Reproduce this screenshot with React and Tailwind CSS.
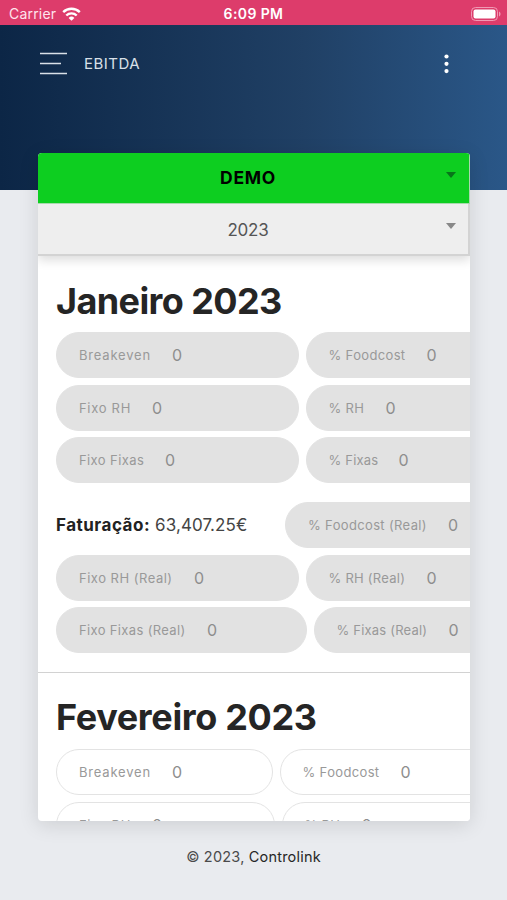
const january = [
  [
    { name: 'Breakeven', size: 'w-[243px]', text: 'w-[71px] tracking-[0.8px]' },
    { name: '% Foodcost', size: 'w-[230px]', text: 'w-[76px] tracking-[0.35px]' },
  ],
  [
    { name: 'Fixo RH', size: 'w-[243px]', text: 'w-[51px] tracking-[0.7px]' },
    { name: '% RH', size: 'w-[230px]', text: 'w-[35px] tracking-[0.35px]' },
  ],
  [
    { name: 'Fixo Fixas', size: 'w-[243px]', text: 'w-[64px] tracking-[0.4px]' },
    { name: '% Fixas', size: 'w-[230px]', text: 'w-[48px] tracking-[0.2px]' },
  ],
];

const januaryReal = [
  [
    { name: 'Fixo RH (Real)', size: 'w-[243px]', text: 'w-[93px] tracking-[0.5px]' },
    { name: '% RH (Real)', size: 'w-[230px]', text: 'w-[76px] tracking-[0.25px]' },
  ],
  [
    { name: 'Fixo Fixas (Real)', size: 'w-[251px]', text: 'w-[106px] tracking-[0.35px]' },
    { name: '% Fixas (Real)', size: 'w-[230px]', text: 'w-[90px] tracking-[0.2px]' },
  ],
];

const february = [
  [
    { name: 'Breakeven', size: 'w-[217px]', text: 'w-[71px] tracking-[0.8px]' },
    { name: '% Foodcost', size: 'w-[230px]', text: 'w-[76px] tracking-[0.35px]' },
  ],
  [
    { name: 'Fixo RH', size: 'w-[219px]', text: 'w-[51px] tracking-[0.7px]' },
    { name: '% RH', size: 'w-[230px]', text: 'w-[35px] tracking-[0.35px]' },
  ],
];

function Field({ name, size, text, outlined }) {
  return (
    <div
      className={`${size} ${outlined ? 'border-[#e3e3e3] bg-white' : 'border-[#e2e2e2] bg-[#e2e2e2]'} flex h-[46px] shrink-0 items-center rounded-full border pl-[22px] text-[#999]`}
    >
      <span className={`${text} shrink-0 pt-[2px] text-[13px] whitespace-nowrap`}>{name}</span>
      <span className="ml-[22px] text-[16px] text-[#8e8e8e]">0</span>
    </div>
  );
}

function Rows({ rows, outlined }) {
  return (
    <div className="flex flex-col gap-[6.5px]">
      {rows.map((row, i) => (
        <div key={i} className="flex gap-[6.5px]">
          {row.map((field) => (
            <Field key={field.name} {...field} outlined={outlined} />
          ))}
        </div>
      ))}
    </div>
  );
}

function Caret({ className }) {
  return (
    <svg className={className} width="10" height="6" viewBox="0 0 10 6" fill="currentColor">
      <path d="M0 0h10L5 6z" />
    </svg>
  );
}

function StatusBar() {
  return (
    <div className="grid h-[25px] shrink-0 grid-cols-3 items-center bg-[#dd3c6b] pt-[2px] pr-[6px] pl-[9px] text-[14px] text-white">
      <div className="flex items-center gap-[6px]">
        <span className="tracking-[0.2px] text-[#ffe4ed]">Carrier</span>
        <svg width="19" height="14" viewBox="0 0 19 14" fill="none" stroke="currentColor" strokeWidth="2.4">
          <path d="M1.2 5.2a11.8 11.8 0 0 1 16.6 0" />
          <path d="M4.3 8.5a7.4 7.4 0 0 1 10.4 0" />
          <path d="M9.5 13.8 6.6 10.9a4.1 4.1 0 0 1 5.8 0z" fill="currentColor" stroke="none" />
        </svg>
      </div>
      <span className="pr-[3px] text-center font-semibold tracking-[0.4px]">6:09 PM</span>
      <svg className="justify-self-end" width="30" height="14" viewBox="0 0 30 14">
        <rect x="0.5" y="0.5" width="26" height="13" rx="4" fill="none" stroke="#f09ab4" />
        <rect x="2.5" y="2.5" width="22" height="9" rx="2" fill="#fff" />
        <path d="M28 4.5c2 .8 2 4.2 0 5z" fill="#f09ab4" />
      </svg>
    </div>
  );
}

export default function App() {
  return (
    <div className="flex h-[900px] w-[507px] flex-col overflow-hidden bg-[#e9ebef] font-['Inter',sans-serif]">
      <StatusBar />

      <header className="flex h-[165px] shrink-0 items-start bg-linear-to-r from-[#0c2646] via-[#204065] via-60% to-[#2a5788] pt-[26px] pr-[58px] pl-10 text-[#d9e0e8]">
        <svg className="mt-px" width="27" height="23" viewBox="0 0 27 23" stroke="currentColor" strokeWidth="1.5">
          <path d="M0 1.5h27M0 11.5h21M0 21.5h27" />
        </svg>
        <span className="ml-[17px] pt-px text-[15px] leading-[24px] tracking-[0.5px]">EBITDA</span>
        <svg className="mt-[2.5px] ml-auto" width="5" height="20" viewBox="0 0 5 20" fill="#fff">
          <circle cx="2.5" cy="2.5" r="2.1" />
          <circle cx="2.5" cy="9.8" r="2.1" />
          <circle cx="2.5" cy="17.1" r="2.1" />
        </svg>
      </header>

      <main className="relative -mt-[37px] mr-[37px] ml-[38px] flex h-[668px] shrink-0 flex-col overflow-hidden rounded-[4px] bg-white shadow-[0_4px_20px_rgba(0,0,0,0.12)]">
        <div className="relative z-10 shrink-0 shadow-[0_4px_10px_rgba(0,0,0,0.14)]">
          <div className="flex h-[51px] items-center border-r border-b border-[#a8d9ad] bg-[#0dce20] text-black">
            <span className="flex-1 pt-px pl-[12px] text-center text-[17.5px] font-bold tracking-[0.7px]">DEMO</span>
            <Caret className="mr-[13px] mb-[7px] text-[#08751a]" />
          </div>
          <div className="flex h-[52px] items-center border-r-2 border-b-2 border-[#d3d3d3] bg-[#eee] text-[#555]">
            <span className="flex-1 pt-[3px] pl-[12px] text-center text-[17px] tracking-[-0.2px]">2023</span>
            <Caret className="mr-3 mb-[7px] text-[#888]" />
          </div>
        </div>

        <section className="h-[417px] shrink-0 border-b border-[#d2d2d2] pt-[23px] pl-[18px]">
          <h2 className="mb-[9px] text-[36px] leading-[44px] font-bold tracking-[-0.6px] text-[#252525]">Janeiro 2023</h2>
          <Rows rows={january} />
          <div className="mt-[19px] mb-[6.5px] flex items-center">
            <p className="w-[229px] shrink-0 pt-[2px] text-[17px] whitespace-nowrap text-[#444]">
              <b className="mr-[5px] inline-block tracking-[0.5px] text-[#222]">Faturação:</b>
              <span className="tracking-[0.1px]">63,407.25€</span>
            </p>
            <Field name="% Foodcost (Real)" size="w-[230px]" text="w-[118px] tracking-[0.35px]" />
          </div>
          <Rows rows={januaryReal} />
        </section>

        <section className="shrink-0 pt-[22px] pl-[18px]">
          <h2 className="mb-[10px] text-[36px] leading-[44px] font-bold tracking-[-0.35px] text-[#252525]">Fevereiro 2023</h2>
          <Rows rows={february} outlined />
        </section>
      </main>

      <footer className="mt-[25px] text-center text-[14.5px] leading-[22px] tracking-[0.2px] text-[#4a4a4a]">
        © 2023, <span className="text-[#262626]">Controlink</span>
      </footer>
    </div>
  );
}
